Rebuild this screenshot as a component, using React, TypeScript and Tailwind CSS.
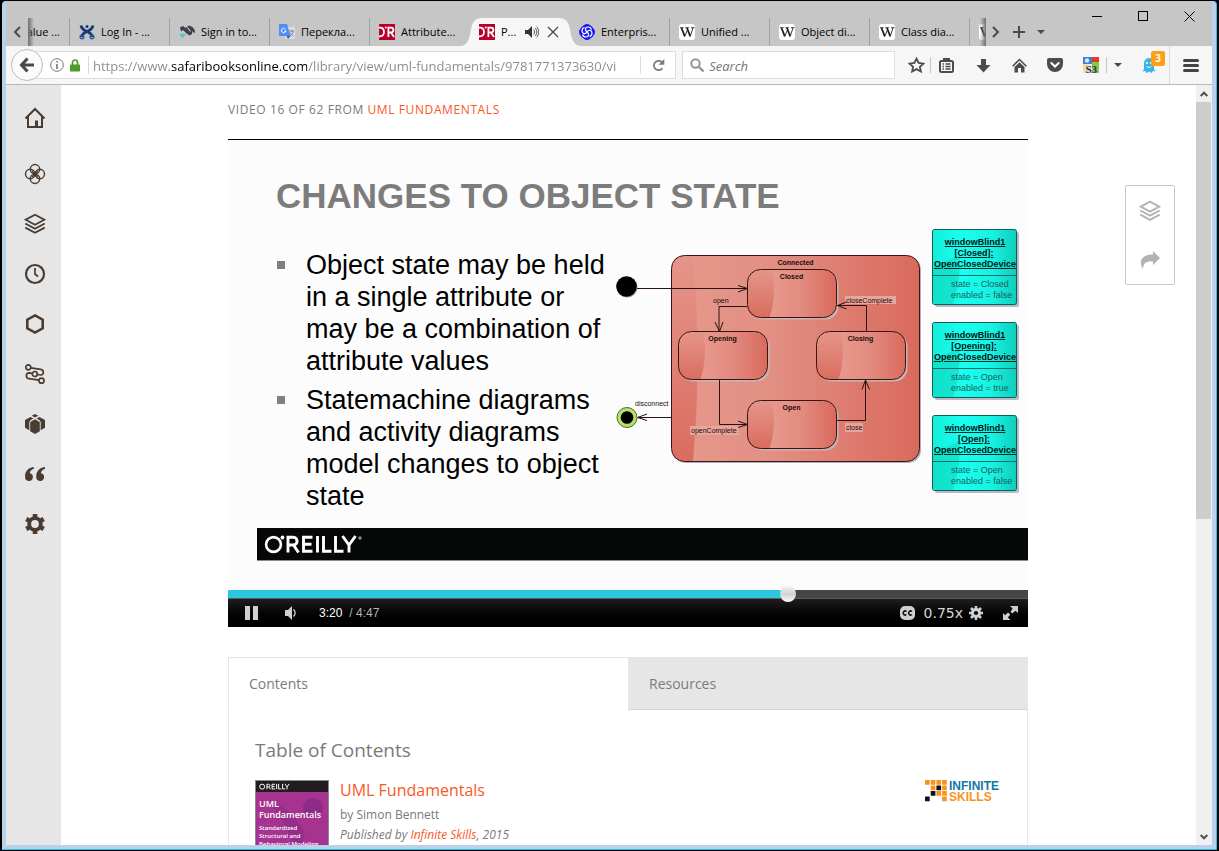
import { useState } from "react";
import type { ReactNode } from "react";

function OreillyFavicon() {
  return (
    <svg width="16" height="16" viewBox="0 0 16 16" className="shrink-0" aria-hidden="true">
      <rect width="16" height="16" fill="#b9002d" />
      <path d="M0 3.7h1c2.500 0 4 1.700 4 4.300s-1.500 4.300-4 4.300H0" fill="none" stroke="#fff" strokeWidth="1.700" />
      <circle cx="6.800" cy="3.500" r="1" fill="#fff" />
      <path d="M9.400 13V3.700h2.600c3.200 0 3.200 4.800 0 4.800H9.400M12 8.500l3 4.500" fill="none" stroke="#fff" strokeWidth="1.800" />
    </svg>
  );
}

function WikiFavicon() {
  return (
    <svg width="16" height="16" viewBox="0 0 16 16" className="shrink-0" aria-hidden="true">
      <rect width="16" height="16" rx="3" fill="#fff" />
      <g fill="none" stroke="#222">
        <path d="M2.500 4l3.300 8.300M8 4l3.300 8.300" strokeWidth="1.800" />
        <path d="M5.800 12.300L8.800 5M11.200 12.300L14 4M1 3.700h3.500M6.300 3.700h3.500M12 3.700h3.400" strokeWidth="0.900" />
      </g>
    </svg>
  );
}

function JiraFavicon() {
  return (
    <svg width="16" height="16" viewBox="0 0 16 16" className="shrink-0" aria-hidden="true">
      <g fill="none" stroke="#15396f" strokeWidth="2.800">
        <path d="M2 1.500c.5 3 2.500 4.500 6 6s5 3 5.500 5.500" />
        <path d="M14 1.500c-.5 3-2.500 4.500-6 6s-5 3-5.500 5.500" />
      </g>
      <circle cx="8" cy="2.600" r="1.500" fill="#15396f" />
      <g fill="none" stroke="#2f5f9e" strokeWidth="1.400">
        <circle cx="3" cy="12.800" r="1.900" />
        <circle cx="13" cy="12.800" r="1.900" />
      </g>
    </svg>
  );
}

function SignFavicon() {
  return (
    <svg width="16" height="16" viewBox="0 0 16 16" className="shrink-0" aria-hidden="true">
      <path d="M1 3.500l3-1.500 2.500 2 2-1.500 1.500-1 3.500 1.500 2.500 3.500-.5 3-2-2.500-.5 3-2.500 1.500-3.500-2.500L4 6l-2 1.500z" fill="#3b4148" />
      <path d="M8.500 3.500l3 4" stroke="#c6c6c6" strokeWidth="1.200" />
      <path d="M0 10h7l-3.500 4z" fill="#3fd1c4" />
    </svg>
  );
}

function TranslateFavicon() {
  return (
    <svg width="16" height="16" viewBox="0 0 16 16" className="shrink-0" aria-hidden="true">
      <rect x="6" y="3" width="10" height="12" rx="1" fill="#dcdcdc" />
      <path d="M1 0h7l3.500 12H1a1 1 0 0 1-1-1V1a1 1 0 0 1 1-1z" fill="#4d8df6" />
      <path d="M7.500 12h4L9 15z" fill="#2f5fc4" />
      <path d="M6.500 5A2.300 2.300 0 1 0 7 7H5" fill="none" stroke="#fff" />
      <path d="M10 7h5M12.500 6v1M14 7c0 2-1.500 4-3 5M11 8.500c.5 1.500 2 3 3.500 3.500" fill="none" stroke="#6b7a8c" strokeWidth="0.900" />
    </svg>
  );
}

function KnotFavicon() {
  return (
    <svg width="16" height="16" viewBox="0 0 16 16" className="shrink-0" aria-hidden="true">
      <g fill="#1a1af0">
        <circle cx="8" cy="4.500" r="4.500" />
        <circle cx="8" cy="11.500" r="4.500" />
        <circle cx="4.500" cy="8" r="4.500" />
        <circle cx="11.500" cy="8" r="4.500" />
        <rect x="2" y="2" width="12" height="12" rx="3" />
      </g>
      <g fill="none" stroke="#fff" strokeWidth="1.200">
        <path d="M8 8C5.500 6.500 6 3 9 3c2 0 3 1 3.500 2.500" />
        <path d="M8 8c1.500-2.500 5-2 5 1 0 2-1 3-2.500 3.500" />
        <path d="M8 8c2.500 1.500 2 5-1 5-2 0-3-1-3.500-2.500" />
        <path d="M8 8c-1.500 2.500-5 2-5-1 0-2 1-3 2.500-3.500" />
      </g>
    </svg>
  );
}

function Tab({ icon, title, divider = true }: { icon: ReactNode; title?: string; divider?: boolean }) {
  return (
    <button
      role="tab"
      aria-selected={false}
      className={
        "flex h-7 w-[100px] shrink-0 items-center gap-1.5 border-l pl-[9px] text-left whitespace-nowrap " +
        (divider ? "border-[#a2a2a2]" : "border-transparent")
      }
    >
      {icon}
      {title && <span>{title}</span>}
    </button>
  );
}

function TitleBar() {
  return (
    <header className="flex h-[45px] shrink-0 bg-[#c6c6c6] text-[11px] text-black">
      <button aria-label="Scroll tabs left" className="mt-[17px] flex h-7 w-[22px] shrink-0 items-center justify-center">
        <svg width="10" height="12" viewBox="0 0 10 12" fill="none" stroke="#4a4a4a" strokeWidth="2">
          <path d="M8 1L3 6l5 5" />
        </svg>
      </button>
      <div role="tablist" className="relative mt-[17px] flex min-w-0 flex-1 overflow-hidden">
        <span className="absolute inset-y-0 left-0 z-10 w-1.5 bg-linear-to-r from-[#6f6f6f] to-transparent" />
        <span className="absolute inset-y-0 right-0 z-10 w-1.5 bg-linear-to-l from-[#6f6f6f] to-transparent" />
        <button role="tab" aria-selected={false} className="flex h-7 w-[41px] shrink-0 items-center justify-end pr-[9px] whitespace-nowrap">
          alue ...
        </button>
        <Tab icon={<JiraFavicon />} title="Log In - ..." />
        <Tab icon={<SignFavicon />} title="Sign in to..." />
        <Tab icon={<TranslateFavicon />} title="Перекла..." />
        <Tab icon={<OreillyFavicon />} title="Attribute..." />
        <div role="tab" aria-selected={true} className="relative h-7 w-[100px] shrink-0">
          <svg width="122" height="28" viewBox="0 0 122 28" className="absolute top-0 -left-[9px]" aria-hidden="true">
            <path d="M0 28C7 28 9 22 10.500 14C12 5 14 0 22 0H99C107 0 109 5 110.500 14C112 22 114 28 122 28z" fill="#f6f6f6" />
          </svg>
          <div className="relative flex h-7 items-center gap-1.5 pl-2.5">
            <OreillyFavicon />
            <span>P...</span>
            <button aria-label="Mute tab" className="ml-[3px]">
              <svg width="14" height="12" viewBox="0 0 14 12">
                <path d="M0 4h3l4-4v12L3 8H0z" fill="#333" />
                <path d="M8.500 3.500c1.500 1.500 1.500 3.500 0 5M10 2c2.500 2 2.500 6 0 8M11.500.7c3 2.800 3 7.800 0 10.600" fill="none" stroke="#555" />
              </svg>
            </button>
            <button aria-label="Close tab" className="ml-0.5">
              <svg width="12" height="12" viewBox="0 0 12 12" stroke="#444" strokeWidth="1.200">
                <path d="M1 1l10 10M11 1L1 11" />
              </svg>
            </button>
          </div>
        </div>
        <Tab icon={<KnotFavicon />} title="Enterpris..." divider={false} />
        <Tab icon={<WikiFavicon />} title="Unified ..." />
        <Tab icon={<WikiFavicon />} title="Object di..." />
        <Tab icon={<WikiFavicon />} title="Class dia..." />
        <Tab icon={<WikiFavicon />} />
      </div>
      <div className="mt-[17px] mr-6 flex h-7 shrink-0 items-center">
        <button aria-label="Scroll tabs right" className="flex w-5 justify-center">
          <svg width="10" height="12" viewBox="0 0 10 12" fill="none" stroke="#4a4a4a" strokeWidth="2">
            <path d="M2 1l5 5-5 5" />
          </svg>
        </button>
        <button aria-label="Open a new tab" className="flex w-[26px] justify-center">
          <svg width="12" height="12" viewBox="0 0 12 12" stroke="#4a4a4a" strokeWidth="2">
            <path d="M6 0v12M0 6h12" />
          </svg>
        </button>
        <button aria-label="List all tabs" className="flex w-[18px] justify-center">
          <svg width="8" height="4" viewBox="0 0 8 4" fill="#4a4a4a">
            <path d="M0 0h8L4 4z" />
          </svg>
        </button>
      </div>
      <div className="flex h-[30px] shrink-0">
        <button aria-label="Minimize" className="flex w-[46px] items-center justify-center">
          <svg width="11" height="11" viewBox="0 0 11 11" stroke="#000" shapeRendering="crispEdges">
            <path d="M0 5.500h10" />
          </svg>
        </button>
        <button aria-label="Maximize" className="flex w-[46px] items-center justify-center">
          <svg width="11" height="11" viewBox="0 0 11 11" stroke="#000" fill="none" shapeRendering="crispEdges">
            <path d="M.5 .5h9v9h-9z" />
          </svg>
        </button>
        <button aria-label="Close window" className="flex w-[46px] items-center justify-center">
          <svg width="11" height="11" viewBox="0 0 11 11" stroke="#000">
            <path d="M.5 .5l10 10M10.500 .5l-10 10" />
          </svg>
        </button>
      </div>
    </header>
  );
}

function Toolbar() {
  return (
    <nav className="flex h-[39px] shrink-0 items-center border-b border-[#b9b9b9] bg-[#f6f6f6] pl-[5px]">
      <button aria-label="Back" className="z-10 flex size-8 shrink-0 items-center justify-center rounded-full border border-[#bdbdbd] bg-[#fbfbfb]">
        <svg width="16" height="16" viewBox="0 0 16 16" fill="none" stroke="#484848" strokeWidth="3">
          <path d="M8.500 1.500L2.500 8l6 6.500M3 8h12" />
        </svg>
      </button>
      <div className="-ml-2 flex h-7 min-w-0 flex-46 items-center border border-[#dedede] bg-white pl-3.5">
        <svg width="14" height="14" viewBox="0 0 14 14" className="shrink-0" fill="none" stroke="#777">
          <circle cx="7" cy="7" r="6.300" />
          <path d="M7 6v5M7 3v1.600" strokeWidth="1.600" />
        </svg>
        <svg width="10" height="13" viewBox="0 0 10 13" className="ml-1.5 shrink-0">
          <path d="M2.500 6V3.500a2.500 2.500 0 0 1 5 0V6" fill="none" stroke="#4f9a2a" strokeWidth="1.700" />
          <rect y="5.500" width="10" height="7" rx="0.800" fill="#4f9a2a" />
        </svg>
        <span className="ml-2 h-[18px] w-px shrink-0 bg-[#d8d8d8]" />
        <input
          aria-label="Address"
          defaultValue="https://www.safaribooksonline.com/library/view/uml-fundamentals/9781771373630/video"
          className="ml-1 h-full min-w-0 flex-1 bg-[linear-gradient(to_right,#8a8a8a_78px,#000000_78px,#000000_214px,#8a8a8a_214px)] bg-clip-text pt-0.5 text-[13px] text-transparent outline-none"
        />
        <span className="ml-6 h-[18px] w-px shrink-0 bg-[#dcdcdc]" />
        <button aria-label="Reload" className="flex w-[34px] shrink-0 justify-center">
          <svg width="13" height="13" viewBox="0 0 13 13">
            <path d="M10.500 9.200A4.700 4.700 0 1 1 9.800 3" fill="none" stroke="#7a7a7a" strokeWidth="1.800" />
            <path d="M12.300 0v5.800H6.500z" fill="#7a7a7a" />
          </svg>
        </button>
      </div>
      <div className="ml-1.5 flex h-7 min-w-0 flex-15 items-center border border-[#dedede] bg-white pl-[7px]">
        <svg width="14" height="14" viewBox="0 0 14 14" className="shrink-0" fill="none" stroke="#959595">
          <circle cx="5.500" cy="5.500" r="4.200" strokeWidth="2" />
          <path d="M8.500 8.500l5 5" strokeWidth="2.400" />
        </svg>
        <input aria-label="Search" placeholder="Search" className="ml-[5px] h-full min-w-0 flex-1 pt-0.5 text-[13px] italic outline-none placeholder:text-[#767676]" />
      </div>
      <div className="ml-[7px] flex h-full shrink-0 items-center">
        <button aria-label="Bookmark this page" className="flex w-7 justify-center">
          <svg width="17" height="16" viewBox="0 0 17 16" fill="none" stroke="#4c4c4c" strokeWidth="1.800">
            <path d="M8.500 1.700l2.100 4.300 4.900.6-3.600 3.200 1 4.700-4.400-2.400-4.400 2.400 1-4.700L1.500 6.600l4.900-.6z" />
          </svg>
        </button>
        <span className="h-4 w-px bg-[#c4c4c4]" />
        <button aria-label="Show bookmarks" className="flex w-[31px] justify-center">
          <svg width="15" height="15" viewBox="0 0 15 15" fill="none" stroke="#4c4c4c">
            <rect x="1" y="3" width="13" height="11" rx="1.500" strokeWidth="2" />
            <path d="M5 2.500V1h5v1.500" strokeWidth="2" />
            <path d="M3.500 6h1.500M6.500 6h5M3.500 8.500h1.500M6.500 8.500h5M3.500 11h1.500M6.500 11h5" strokeWidth="1.300" />
          </svg>
        </button>
        <button aria-label="Downloads" className="ml-[3px] flex w-9 justify-center">
          <svg width="15" height="15" viewBox="0 0 15 15" fill="#4c4c4c">
            <path d="M5 1h5v6h4.500l-7 7.500-7-7.500H5z" />
          </svg>
        </button>
        <button aria-label="Home" className="flex w-9 justify-center">
          <svg width="15" height="15" viewBox="0 0 15 15">
            <path d="M.7 8.200L7.500 1.500l6.800 6.700" fill="none" stroke="#4c4c4c" strokeWidth="1.600" />
            <path d="M7.500 4.300l5 4.800V14.500H9V10H6v4.500H2.500V9.100z" fill="#4c4c4c" />
          </svg>
        </button>
        <button aria-label="Save to Pocket" className="flex w-9 justify-center">
          <svg width="16" height="14" viewBox="0 0 16 14">
            <path d="M2 0h12a2 2 0 0 1 2 2v4a8 8 0 0 1-16 0V2a2 2 0 0 1 2-2z" fill="#4c4c4c" />
            <path d="M4.300 5L8 8.500 11.700 5" fill="none" stroke="#fff" strokeWidth="2" strokeLinecap="round" />
          </svg>
        </button>
        <button aria-label="S3 organizer" className="ml-0.5 flex w-[31px] justify-center">
          <svg width="16" height="16" viewBox="0 0 16 16">
            <rect width="16" height="16" fill="#e8ece4" />
            <rect width="9" height="7" fill="#3d7fd0" />
            <circle cx="4" cy="3.500" r="2.200" fill="#d6e6f7" />
            <rect x="9" width="7" height="5" fill="#e5372c" />
            <path d="M9 5h7v11H9z" fill="#8dc63f" />
            <path d="M0 7h4l5 5v4H0z" fill="#e9e3a0" />
            <text x="2.500" y="15.500" fontSize="11" fontWeight="700" fontFamily="Liberation Serif, serif" fill="#1d2a8b">S3</text>
          </svg>
        </button>
        <span className="h-4 w-px bg-[#c4c4c4]" />
        <button aria-label="More tools" className="flex w-[22px] justify-center">
          <svg width="8" height="4" viewBox="0 0 8 4" fill="#4a4a4a">
            <path d="M0 0h8L4 4z" />
          </svg>
        </button>
        <button aria-label="Ghostery, 3 trackers" className="relative ml-0.5 flex w-9 justify-center">
          <svg width="14" height="15" viewBox="0 0 14 15">
            <path d="M2 5a5 5 0 0 1 10 0v6l1.500 2.500L11 13l-1.500 2-2.500-1.500L4.500 15 3 13l-2.500.5L2 11z" fill="#3db4e8" />
            <circle cx="5" cy="5" r="1.100" fill="#fff" />
            <circle cx="9" cy="5" r="1.100" fill="#fff" />
            <path d="M4.500 8c1.500 2 3.500 2 5 0" fill="none" stroke="#fff" />
          </svg>
          <span className="absolute -top-[7px] right-0.5 h-[15px] w-3.5 rounded-xs bg-[#ff9f14] text-center text-[10px] leading-[15px] font-bold text-white">3</span>
        </button>
        <span className="ml-0.5 h-full w-px bg-[#dcdcdc]" />
        <button aria-label="Open menu" className="flex w-[42px] justify-center">
          <svg width="16" height="13" viewBox="0 0 16 13" stroke="#444" strokeWidth="3" strokeLinecap="round">
            <path d="M1.500 1.500h13M1.500 6.500h13M1.500 11.500h13" />
          </svg>
        </button>
      </div>
    </nav>
  );
}

function LayersIcon({ strokeWidth = 1.8 }: { strokeWidth?: number }) {
  return (
    <svg width="22" height="22" viewBox="0 0 22 22" fill="none" stroke="currentColor" strokeWidth={strokeWidth}>
      <path d="M11 1.700l9.300 5-9.300 5-9.300-5z" />
      <path d="M1.300 10.500L11 15.700l9.700-5.200M1.300 14.600L11 19.800l9.700-5.200" />
    </svg>
  );
}

const sideIcons: { label: string; icon: ReactNode }[] = [
  {
    label: "Recommended",
    icon: (
      <svg width="22" height="22" viewBox="0 0 22 22" fill="none" stroke="currentColor" strokeWidth="1.400">
        <circle cx="11" cy="6.200" r="4.700" />
        <circle cx="11" cy="15.800" r="4.700" />
        <circle cx="6.200" cy="11" r="4.700" />
        <circle cx="15.800" cy="11" r="4.700" />
        <path d="M8 8l6 6M14 8l-6 6" />
      </svg>
    ),
  },
  { label: "Queue", icon: <LayersIcon /> },
  {
    label: "Recent",
    icon: (
      <svg width="22" height="22" viewBox="0 0 22 22" fill="none" stroke="currentColor" strokeWidth="2.200">
        <circle cx="11" cy="11" r="9" />
        <path d="M11 5v6l3 2.500" strokeWidth="1.700" />
      </svg>
    ),
  },
  {
    label: "Topics",
    icon: (
      <svg width="22" height="22" viewBox="0 0 22 22" fill="none" stroke="currentColor" strokeWidth="2.600">
        <path d="M11 2.400l7.700 4.300v8.600L11 19.600l-7.700-4.300V6.700z" />
      </svg>
    ),
  },
  {
    label: "Learning paths",
    icon: (
      <svg width="22" height="22" viewBox="0 0 22 22" fill="none" stroke="currentColor" strokeWidth="1.700">
        <circle cx="4.300" cy="4.300" r="2.500" />
        <circle cx="10.800" cy="11" r="2.500" />
        <circle cx="17.500" cy="17.700" r="2.500" />
        <path d="M6.800 4.800l10 1.600c3.300.6 3.500 5.700 0 5.600l-3.500-.5M8.300 10.300l-3.300-.4c-3.300 0-3.600 5.400-.2 5.800l10.200 1.500" />
      </svg>
    ),
  },
  {
    label: "Offers",
    icon: (
      <svg width="22" height="22" viewBox="0 0 22 22" fill="currentColor">
        <path d="M11 1l3.300 1.800L11 4.500 7.700 2.800zM6.500 3.900l3 1.500C6.500 7 5.300 8 5.300 9.500v7.700L1 14.700V7zM15.500 3.900l-3 1.500c3 1.600 4.200 2.600 4.200 4.100v7.700l4.300-2.500V7z" />
        <path d="M11 6.300l4.800 2.700v9.300L11 21l-4.800-2.700V9z" />
      </svg>
    ),
  },
  {
    label: "Highlights",
    icon: (
      <svg width="22" height="22" viewBox="0 0 22 22" fill="currentColor">
        <path d="M9.800 4v1.800C7.500 6.500 6 8 5.700 10.200a3.900 3.900 0 1 1-4.600 3.600C.8 8.500 4.500 4.300 9.800 4z" />
        <path d="M21 4v1.800c-2.300.7-3.800 2.200-4.100 4.400a3.900 3.900 0 1 1-4.600 3.600C12 8.500 15.700 4.300 21 4z" />
      </svg>
    ),
  },
  {
    label: "Settings",
    icon: (
      <svg width="22" height="22" viewBox="0 0 22 22" fill="none" stroke="currentColor">
        <circle cx="11" cy="11" r="5.800" strokeWidth="3.800" />
        <path d="M11 1v4M11 17v4M2.300 6l3.500 2M16.200 14l3.500 2M2.300 16l3.500-2M16.200 8l3.500-2" strokeWidth="4.600" />
      </svg>
    ),
  },
];

function Sidebar() {
  return (
    <aside className="flex w-[55px] shrink-0 flex-col items-center bg-[#e6e6e6] pt-2 pl-[3px] text-[#4a3c31]">
      <button aria-label="Home" className="mb-1.5 flex h-[50px] w-full items-center justify-center">
        <svg width="22" height="22" viewBox="0 0 22 22" fill="none" stroke="currentColor" strokeWidth="2">
          <path d="M1.500 11.500L11 2l9.500 9.500M4 9.500V20h14V9.500" />
          <path d="M12.500 20v-6.500" strokeWidth="3" />
        </svg>
      </button>
      {sideIcons.map((item) => (
        <button key={item.label} aria-label={item.label} className="flex h-[50px] w-full shrink-0 items-center justify-center">
          {item.icon}
        </button>
      ))}
    </aside>
  );
}

function StateBox({ x, y, name }: { x: number; y: number; name: string }) {
  return (
    <g>
      <rect x={x + 2} y={y + 2} width="89" height="48" rx="13" fill="#c9b3b4" />
      <rect x={x} y={y} width="89" height="48" rx="13" fill="url(#state)" />
      <path d={`M${x + 13} ${y}H${x + 25}Q${x + 29} ${y + 28} ${x + 22} ${y + 48}H${x + 13}Q${x} ${y + 48} ${x} ${y + 35}V${y + 13}Q${x} ${y} ${x + 13} ${y}`} fill="url(#shade)" />
      <rect x={x} y={y} width="89" height="48" rx="13" fill="none" stroke="#3a1512" />
      <text x={x + 44} y={y + 9} textAnchor="middle" fontWeight="700">{name}</text>
    </g>
  );
}

function ObjectBox({ y, state, value, enabled }: { y: number; state: string; value: string; enabled: string }) {
  return (
    <g>
      <rect x="935" y={y + 3} width="84" height="75" rx="2" fill="#b9b9c8" />
      <rect x="932.500" y={y + 0.5} width="84" height="75" rx="2" fill="url(#object)" stroke="#0a5f57" />
      <path d={`M933 ${y + 75}V${y + 38}L960 ${y + 26}Q960 ${y + 55} 953 ${y + 75}z`} fill="#0fd9c0" opacity="0.6" />
      <path d={`M933 ${y + 46.5}h84`} stroke="#0a6f66" />
      <g fontWeight="700" fontSize="9" textAnchor="middle" textDecoration="underline" fill="#021614">
        <text x="975" y={y + 16}>windowBlind1</text>
        <text x="974" y={y + 27}>{state}</text>
        <text x="975" y={y + 38}>OpenClosedDevice</text>
      </g>
      <g fontSize="9" fill="#1b5f5a">
        <text x="951" y={y + 58}>state = {value}</text>
        <text x="951" y={y + 69}>enabled = {enabled}</text>
      </g>
    </g>
  );
}

function StateDiagram() {
  return (
    <svg width="416" height="280" viewBox="612 224 416 280" className="shrink-0" fontFamily="Liberation Sans, Arial, sans-serif" fontSize="7" fill="#1c0b0a" role="img" aria-label="Window blind state machine">
      <defs>
        <linearGradient id="outer">
          <stop offset="0" stopColor="#e8988c" />
          <stop offset="0.400" stopColor="#e28f84" />
          <stop offset="1" stopColor="#d96a5c" />
        </linearGradient>
        <linearGradient id="state">
          <stop offset="0.250" stopColor="#e8998e" />
          <stop offset="0.600" stopColor="#e38b80" />
          <stop offset="1" stopColor="#d96a5c" />
        </linearGradient>
        <linearGradient id="shade" x2="0" y2="1">
          <stop offset="0" stopColor="#e5958a" />
          <stop offset="1" stopColor="#d96d5f" />
        </linearGradient>
        <linearGradient id="object">
          <stop offset="0" stopColor="#14eeda" />
          <stop offset="0.350" stopColor="#19fff0" />
          <stop offset="0.700" stopColor="#17f3e3" />
          <stop offset="1" stopColor="#10cdbb" />
        </linearGradient>
      </defs>
      <rect x="673" y="257" width="248" height="206" rx="13" fill="#aeb0c0" />
      <rect x="671.500" y="255.500" width="248" height="206" rx="13" fill="url(#outer)" />
      <path d="M684 256H693Q702 360 693 461H684Q672 461 672 449V268Q672 256 684 256z" fill="url(#shade)" />
      <rect x="671.500" y="255.500" width="248" height="206" rx="13" fill="none" stroke="#3a1512" />
      <text x="795.500" y="264.500" textAnchor="middle" fontWeight="700">Connected</text>
      <StateBox x={747.5} y={269.5} name="Closed" />
      <StateBox x={678.5} y={331.5} name="Opening" />
      <StateBox x={816.5} y={331.5} name="Closing" />
      <StateBox x={747.5} y={400.5} name="Open" />
      <rect x="845" y="296" width="51" height="8" fill="#e8a59c" />
      <rect x="690" y="426" width="49" height="9" fill="#e8a59c" />
      <rect x="845" y="423" width="18" height="9" fill="#e8a59c" />
      <circle cx="627" cy="287" r="10.500" fill="#9a9a9a" />
      <circle cx="626.500" cy="286.500" r="10.300" fill="#000" />
      <circle cx="627" cy="417.500" r="10" fill="#b5e06c" stroke="#4f6b28" />
      <circle cx="627" cy="417.500" r="6.300" fill="#000" />
      <g fill="none" stroke="#2a1210">
        <path d="M637 288.500h110M738 285.500l9.500 3-9.500 3.500" />
        <path d="M747 306.500h-28v25M715 322l4.500 9.500 3.500-9.500" />
        <path d="M719.500 380v44.500h28M738 421l9.500 3.500-9.500 3" />
        <path d="M837 420.500h28.500V380M862 389.500l3.500-9.500 4 9.500" />
        <path d="M866.500 331v-25.500H837M846.500 302l-9 3.500 9 3.500" />
        <path d="M671 417.500h-33M647 414l-9.500 3.500 9.500 3" />
      </g>
      <text x="713" y="303">open</text>
      <text x="846" y="302.500">closeComplete</text>
      <text x="691" y="433">openComplete</text>
      <text x="846" y="430">close</text>
      <text x="635" y="405.500">disconnect</text>
      <ObjectBox y={229} state="[Closed]:" value="Closed" enabled="false" />
      <ObjectBox y={322} state="[Opening]:" value="Open" enabled="true" />
      <ObjectBox y={415} state="[Open]:" value="Open" enabled="false" />
    </svg>
  );
}

function OreillyMark() {
  return (
    <svg width="100" height="20" viewBox="0 0 100 20" role="img" aria-label="O'Reilly">
      <circle cx="9.500" cy="10.500" r="7.400" fill="none" stroke="#fff" strokeWidth="2.600" />
      <circle cx="18.500" cy="3.500" r="1.900" fill="#fff" />
      <g fill="none" stroke="#fff" strokeWidth="2.900">
        <path d="M24 18.500V3.300h5.300c5 0 5 7.700 0 7.700H24M29.500 11l5 7.500" />
        <path d="M48.500 3.300H39.500v14h9M39.500 10.300h8M53.500 2v16.500M59.500 2v15.300h8M71.500 2v15.300h8M78.500 2l6.500 9 6.500-9M85 10.500v8" />
      </g>
      <circle cx="96" cy="4" r="1.700" fill="#8f8f8f" />
    </svg>
  );
}

function Slide() {
  return (
    <div className="bg-[#fcfcfc] pt-9 pb-[29px]">
      <h1 className="ml-12 text-[35px] leading-10 font-bold whitespace-nowrap text-[#7c7c7c]">CHANGES TO OBJECT STATE</h1>
      <div className="mt-2 flex justify-between pb-4 pl-[49px]">
        <ul className="w-[334px] space-y-[7px] pt-[25px] text-[27px] leading-8 text-black">
          <li className="flex gap-[21px]">
            <span className="mt-3 size-2 shrink-0 bg-[#7f7f7f]" />
            <span>Object state may be held in a single attribute or may be a combination of attribute values</span>
          </li>
          <li className="flex gap-[21px]">
            <span className="mt-3 size-2 shrink-0 bg-[#7f7f7f]" />
            <span>Statemachine diagrams and activity diagrams model changes to object state</span>
          </li>
        </ul>
        <StateDiagram />
      </div>
      <div className="ml-[29px] flex h-[33px] items-center border-b border-[#8a8a8a] bg-[#060807] pl-[7px]">
        <OreillyMark />
      </div>
    </div>
  );
}

function Player() {
  const [time, setTime] = useState(202);
  const duration = 287;
  const played = Math.round((time / duration) * 100);
  return (
    <section aria-label="Video player" className="font-['Liberation_Sans',Arial,sans-serif]">
      <Slide />
      <input
        type="range"
        aria-label="Seek"
        min={0}
        max={duration}
        value={time}
        onChange={(e) => setTime(Number(e.target.value))}
        className="block h-2 w-full appearance-none [&::-webkit-slider-thumb]:size-4 [&::-webkit-slider-thumb]:appearance-none [&::-webkit-slider-thumb]:rounded-full [&::-webkit-slider-thumb]:bg-linear-to-b [&::-webkit-slider-thumb]:from-[#f4f4f4] [&::-webkit-slider-thumb]:via-[#d2d2d2] [&::-webkit-slider-thumb]:to-[#fafafa]"
        style={{ background: `linear-gradient(to right, #2dc6e2 ${played}%, #464646 ${played}%)` }}
      />
      <div className="flex h-[29px] items-center border-t border-[#5a5a5a] bg-linear-to-b from-[#1e1e1e] to-black pl-[17px] text-[12px] text-[#b5b5b5]">
        <button aria-label="Pause">
          <svg width="13" height="14" viewBox="0 0 13 14" fill="#d0d0d0">
            <path d="M0 0h5v14H0zM8 0h5v14H8z" />
          </svg>
        </button>
        <button aria-label="Volume" className="ml-[27px]">
          <svg width="11" height="14" viewBox="0 0 11 14">
            <path d="M0 4h3l4-4v14L3 10H0z" fill="#d0d0d0" />
            <path d="M8.500 3.500c2 2 2 5 0 7" fill="none" stroke="#d0d0d0" strokeWidth="1.500" />
          </svg>
        </button>
        <span className="ml-[23px] text-white">3:20</span>
        <span className="ml-[7px]">/ 4:47</span>
        <button aria-label="Captions" className="ml-auto">
          <svg width="15" height="14" viewBox="0 0 15 14">
            <rect width="15" height="14" rx="5" fill="#d0d0d0" />
            <path d="M6.500 5.500a2 2 0 1 0 0 3M12 5.500a2 2 0 1 0 0 3" fill="none" stroke="#111" strokeWidth="1.500" />
          </svg>
        </button>
        <button aria-label="Playback speed" className="ml-[9px] font-['DejaVu_Sans',sans-serif] text-[14px] text-[#d6d6d6]">
          0.75x
        </button>
        <button aria-label="Settings" className="ml-1.5">
          <svg width="14" height="14" viewBox="0 0 14 14" fill="none" stroke="#d0d0d0">
            <circle cx="7" cy="7" r="3.600" strokeWidth="3" />
            <path d="M7 0v3M7 11v3M0 7h3M11 7h3M2 2l2 2M10 10l2 2M2 12l2-2M10 4l2-2" strokeWidth="2.600" />
          </svg>
        </button>
        <button aria-label="Full screen" className="mr-2.5 ml-5">
          <svg width="15" height="14" viewBox="0 0 15 14">
            <path d="M7 0h8v7l-2.500-2.300L9.300 7.500 7.500 5.700 9.700 2.500zM0 7l2 2.200L5 6.500 7.300 8.500 4.800 11.500 7.500 14H0z" fill="#d0d0d0" />
          </svg>
        </button>
      </div>
    </section>
  );
}

const logoCells: [number, number, string][] = [
  [0, 0, "#f7941d"], [1, 0, "#f7941d"], [2, 0, "#f7941d"], [3, 0, "#f7941d"],
  [1, 1, "#f7941d"], [2, 1, "#111"], [3, 1, "#f7941d"],
  [1, 2, "#111"], [2, 2, "#f7941d"], [3, 2, "#f7941d"],
  [0, 3, "#111"], [3, 3, "#f7941d"],
];

function InfiniteSkillsLogo() {
  return (
    <svg width="76" height="22" viewBox="0 0 76 22" role="img" aria-label="Infinite Skills" className="shrink-0">
      {logoCells.map(([col, row, fill]) => (
        <rect key={`${col}-${row}`} x={col * 5.7} y={row * 5.5} width="4.700" height="4.700" rx="0.500" fill={fill} />
      ))}
      <g fontFamily="Liberation Sans, Arial, sans-serif" fontWeight="700" fontSize="12">
        <text x="24" y="9.500" fill="#1177a6">INFINITE</text>
        <text x="24" y="21" fill="#f7941d">SKILLS</text>
      </g>
    </svg>
  );
}

function BookCover() {
  return (
    <div className="relative h-[110px] w-[74px] shrink-0 overflow-hidden border border-[#8c8c8c] bg-[#a5338f] font-['Open_Sans',sans-serif] text-white">
      <div className="flex h-[11px] items-center bg-[#221c20] pl-[3px]">
        <svg width="33" height="7" viewBox="0 0 100 20" aria-hidden="true">
          <g fill="none" stroke="#fff" strokeWidth="3">
            <circle cx="9.500" cy="10.500" r="7.600" />
            <path d="M24 18.500V3.300h5.300c5 0 5 7.700 0 7.700H24M29.500 11l5 7.500M48.500 3.300H39.500v14h9M39.500 10.300h8M53.500 2v16.500M59.500 2v15.300h8M71.500 2v15.300h8M78.500 2l6.500 9 6.500-9M85 10.500v8" />
          </g>
        </svg>
      </div>
      <svg width="72" height="98" viewBox="0 0 72 98" className="absolute top-[11px] left-0" aria-hidden="true">
        <circle cx="57" cy="16" r="10" fill="#8d2c86" />
        <path d="M15 12c12 0 25 10 34 30l-10 30c0-25-10-40-24-60z" fill="#962e89" />
      </svg>
      <div className="relative pt-1.5 pl-[3px] whitespace-nowrap">
        <p className="text-[9px] leading-[11px] font-semibold">UML<br />Fundamentals</p>
        <p className="mt-1 text-[6px] leading-2 font-semibold">Standardized<br />Structural and<br />Behavioral Modeling</p>
      </div>
    </div>
  );
}

function BookPanel() {
  return (
    <section className="mt-[30px]">
      <div role="tablist" className="grid grid-cols-2 text-[14px] text-[#7b7b7b]">
        <button role="tab" aria-selected={true} className="h-[53px] border-y border-l border-[#e6e6e6] border-b-white bg-white pl-5 text-left">
          Contents
        </button>
        <button role="tab" aria-selected={false} className="h-[53px] border-y border-t-[#e6e6e6] border-b-[#d6d6d6] bg-[#e6e6e6] pl-[21px] text-left">
          Resources
        </button>
      </div>
      <div className="h-[200px] border-x border-[#e6e6e6] px-[26px] pt-[26px] text-[#7a7a7a]">
        <h2 className="text-[19px] leading-7">Table of Contents</h2>
        <div className="mt-4 flex">
          <BookCover />
          <div className="ml-[11px] flex-1">
            <h3 className="text-[16px] leading-5">
              <a href="#uml-fundamentals" className="text-[#f9591f]">UML Fundamentals</a>
            </h3>
            <p className="mt-[5px] text-[12px] leading-5">by Simon Bennett</p>
            <p className="text-[12px] leading-5 italic">
              Published by <a href="#infinite-skills" className="text-[#f9591f]">Infinite Skills</a>, 2015
            </p>
          </div>
          <InfiniteSkillsLogo />
        </div>
      </div>
    </section>
  );
}

function Scrollbar() {
  return (
    <div className="flex w-[17px] shrink-0 flex-col border-l border-white bg-[#f0f0f0]" aria-hidden="true">
      <span className="flex h-[17px] shrink-0 items-center justify-center">
        <svg width="8" height="6" viewBox="0 0 8 6" fill="none" stroke="#505050" strokeWidth="2">
          <path d="M.7 5L4 1.700 7.300 5" />
        </svg>
      </span>
      <span className="flex min-h-0 flex-1 flex-col">
        <span className="mr-px h-[57.5%] bg-[#cdcdcd]" />
      </span>
      <span className="flex h-[17px] shrink-0 items-center justify-center">
        <svg width="8" height="6" viewBox="0 0 8 6" fill="none" stroke="#505050" strokeWidth="2">
          <path d="M.7 1L4 4.300 7.300 1" />
        </svg>
      </span>
    </div>
  );
}

export default function App() {
  return (
    <div className="flex h-screen bg-black px-0.5 py-px font-['Open_Sans','Noto_Sans',sans-serif]">
      <div className="flex min-w-0 flex-1 flex-col rounded-t-sm border-r border-b border-[#22c5ea] bg-[#b9d1ea] px-1 pb-1">
        <TitleBar />
        <Toolbar />
        <div className="flex min-h-0 flex-1 bg-white">
          <Sidebar />
          <main className="relative min-w-0 flex-1 overflow-hidden">
            <div className="mx-auto w-full max-w-[800px]">
              <p className="border-b border-black pt-4 pb-5 text-[12px] leading-[18px] tracking-wider text-[#7b7b7b]">
                VIDEO 16 OF 62 FROM <a href="#uml-fundamentals" className="text-[#f9591f]">UML FUNDAMENTALS</a>
              </p>
              <Player />
              <BookPanel />
            </div>
            <div className="absolute top-[100px] right-5 flex w-[50px] flex-col items-center rounded-xs border border-[#c8c8c8] bg-white text-[#b3b3b3]">
              <button aria-label="Add to queue" className="flex h-[49px] w-full items-center justify-center">
                <LayersIcon strokeWidth={1.9} />
              </button>
              <button aria-label="Share" className="flex h-[49px] w-full items-center justify-center">
                <svg width="22" height="20" viewBox="0 0 22 20" fill="currentColor">
                  <path d="M14 1l7 7-7 7v-3.500C8 11 4.500 12 4 19 -1 11 3 4.500 14 4.500z" />
                </svg>
              </button>
            </div>
          </main>
          <Scrollbar />
        </div>
      </div>
    </div>
  );
}
